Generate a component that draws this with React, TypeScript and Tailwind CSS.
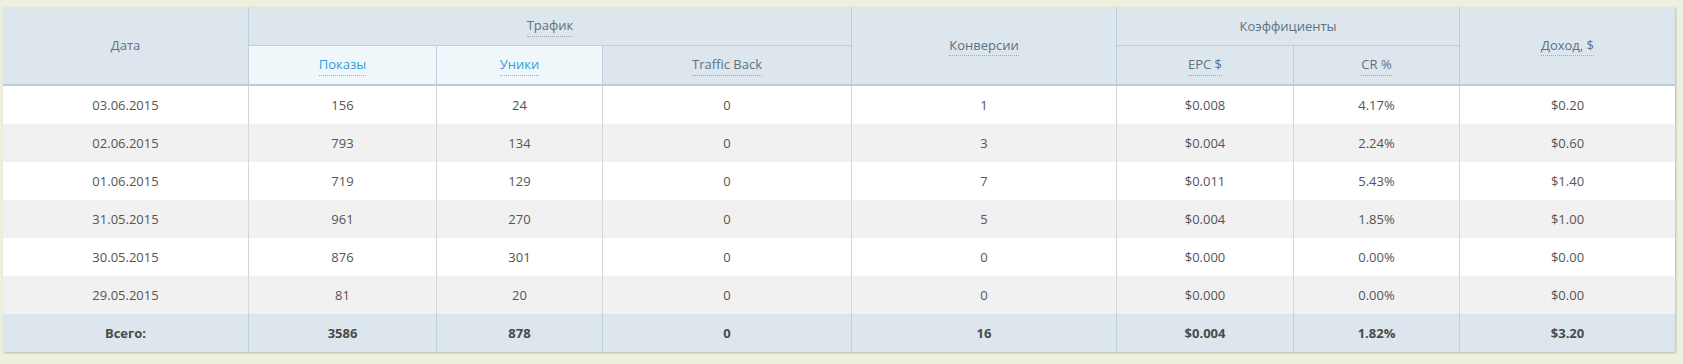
import React from "react";

const rows = [
  ["03.06.2015", "156", "24", "0", "1", "$0.008", "4.17%", "$0.20"],
  ["02.06.2015", "793", "134", "0", "3", "$0.004", "2.24%", "$0.60"],
  ["01.06.2015", "719", "129", "0", "7", "$0.011", "5.43%", "$1.40"],
  ["31.05.2015", "961", "270", "0", "5", "$0.004", "1.85%", "$1.00"],
  ["30.05.2015", "876", "301", "0", "0", "$0.000", "0.00%", "$0.00"],
  ["29.05.2015", "81", "20", "0", "0", "$0.000", "0.00%", "$0.00"],
];
const total = ["Всего:", "3586", "878", "0", "16", "$0.004", "1.82%", "$3.20"];

function U({ children, blue }: { children: React.ReactNode; blue?: boolean }) {
  return (
    <span
      className={
        "border-b border-dotted border-[#a9a9a9] " +
        (blue ? "text-[#2f9ede]" : "text-[#5d7282]")
      }
    >
      {children}
    </span>
  );
}

const hCell =
  "flex items-center justify-center pt-[1px] bg-[#dce6ec] border-[#b9cfdc] text-[13px]";

export default function App() {
  return (
    <div
      className="min-h-[364px] w-full bg-[#efefe0] pt-[7px] pl-[3px]"
      style={{ fontFamily: '"Open Sans", "Liberation Sans", sans-serif' }}
    >
      <div className="w-[1672px] shadow-[1px_1px_2px_rgba(0,0,0,0.22)]">
        <div className="grid grid-cols-[246px_188px_166px_249px_265px_177px_166px_215px] grid-rows-[39px_40px]">
          <div className={hCell + " row-span-2 border-r border-b-2 text-[#5d7282]"}>Дата</div>
          <div className={hCell + " col-span-3 border-r border-b"}>
            <U>Трафик</U>
          </div>
          <div className={hCell + " row-span-2 border-r border-b-2"}>
            <U>Конверсии</U>
          </div>
          <div className={hCell + " col-span-2 border-r border-b text-[#5d7282]"}>Коэффициенты</div>
          <div className={hCell + " row-span-2 border-b-2"}>
            <U>Доход, $</U>
          </div>
          <div className={hCell + " !bg-[#eff7fb] border-r border-b-2"}>
            <U blue>Показы</U>
          </div>
          <div className={hCell + " !bg-[#eff7fb] border-r border-b-2"}>
            <U blue>Уники</U>
          </div>
          <div className={hCell + " border-r border-b-2"}>
            <U>Traffic Back</U>
          </div>
          <div className={hCell + " border-r border-b-2"}>
            <U>EPC $</U>
          </div>
          <div className={hCell + " border-r border-b-2"}>
            <U>CR %</U>
          </div>
        </div>
        {rows.map((r, i) => (
          <div
            key={i}
            className={
              "grid h-[38px] grid-cols-[246px_188px_166px_249px_265px_177px_166px_215px] text-[13px] text-[#555] " +
              (i % 2 === 1 ? "bg-[#f1f1f1]" : "bg-white")
            }
          >
            {r.map((c, j) => (
              <div
                key={j}
                className={
                  "flex items-center justify-center pt-[1px] " +
                  (j < 7 ? "border-r border-[#d6d6d6]" : "")
                }
              >
                {c}
              </div>
            ))}
          </div>
        ))}
        <div className="grid h-[38px] grid-cols-[246px_188px_166px_249px_265px_177px_166px_215px] bg-[#dce6ec] text-[13px] font-bold text-[#4a4a4a]">
          {total.map((c, j) => (
            <div
              key={j}
              className={
                "flex items-center justify-center pt-[1px] " +
                (j < 7 ? "border-r border-[#bed1dd]" : "")
              }
            >
              {c}
            </div>
          ))}
        </div>
      </div>
    </div>
  );
}
